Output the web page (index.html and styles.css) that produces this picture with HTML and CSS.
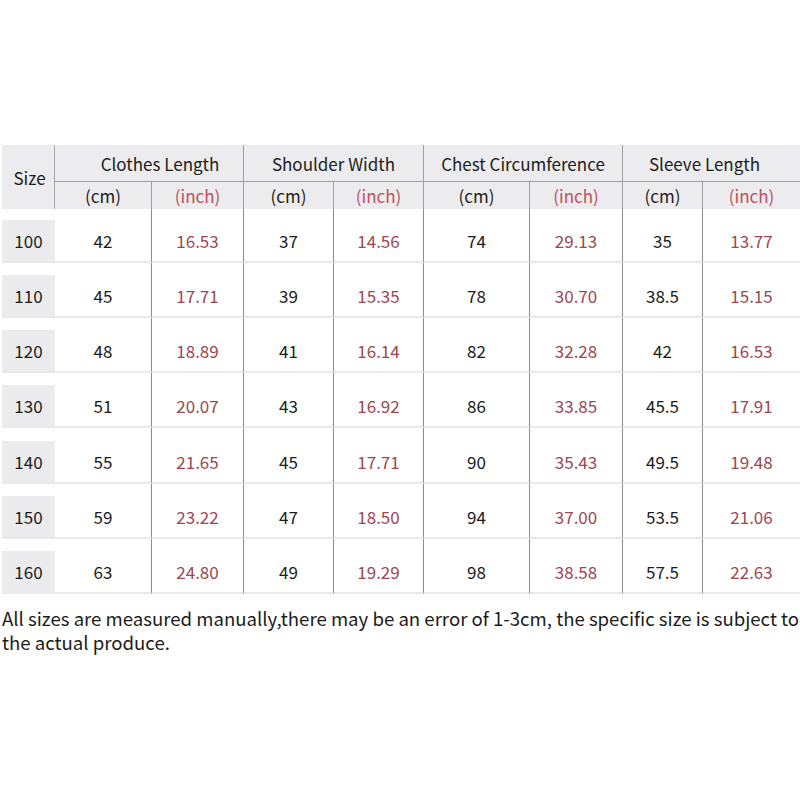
FILE: index.html
```html
<!DOCTYPE html>
<html>
<head>
<meta charset="utf-8">
<link rel="stylesheet" href="styles.css">
</head>
<body>
<div class="page">
  <div class="table">
    <div class="head">
      <div class="h-size">Size</div>
      <div class="h-group g1">Clothes Length</div>
      <div class="h-group g2 sep">Shoulder Width</div>
      <div class="h-group g3 sep">Chest Circumference</div>
      <div class="h-group g4 sep">Sleeve Length</div>
      <div class="h-unit">(cm)</div>
      <div class="h-unit inch sep">(inch)</div>
      <div class="h-unit sep">(cm)</div>
      <div class="h-unit inch sep">(inch)</div>
      <div class="h-unit sep">(cm)</div>
      <div class="h-unit inch sep">(inch)</div>
      <div class="h-unit sep">(cm)</div>
      <div class="h-unit inch sep">(inch)</div>
    </div>
    <div class="body">
      <div class="row first"><div class="c size">100</div><div class="c">42</div><div class="c in sep">16.53</div><div class="c sep">37</div><div class="c in sep">14.56</div><div class="c sep">74</div><div class="c in sep">29.13</div><div class="c sep">35</div><div class="c in sep">13.77</div></div>
      <div class="row"><div class="c size">110</div><div class="c">45</div><div class="c in sep">17.71</div><div class="c sep">39</div><div class="c in sep">15.35</div><div class="c sep">78</div><div class="c in sep">30.70</div><div class="c sep">38.5</div><div class="c in sep">15.15</div></div>
      <div class="row"><div class="c size">120</div><div class="c">48</div><div class="c in sep">18.89</div><div class="c sep">41</div><div class="c in sep">16.14</div><div class="c sep">82</div><div class="c in sep">32.28</div><div class="c sep">42</div><div class="c in sep">16.53</div></div>
      <div class="row"><div class="c size">130</div><div class="c">51</div><div class="c in sep">20.07</div><div class="c sep">43</div><div class="c in sep">16.92</div><div class="c sep">86</div><div class="c in sep">33.85</div><div class="c sep">45.5</div><div class="c in sep">17.91</div></div>
      <div class="row"><div class="c size">140</div><div class="c">55</div><div class="c in sep">21.65</div><div class="c sep">45</div><div class="c in sep">17.71</div><div class="c sep">90</div><div class="c in sep">35.43</div><div class="c sep">49.5</div><div class="c in sep">19.48</div></div>
      <div class="row"><div class="c size">150</div><div class="c">59</div><div class="c in sep">23.22</div><div class="c sep">47</div><div class="c in sep">18.50</div><div class="c sep">94</div><div class="c in sep">37.00</div><div class="c sep">53.5</div><div class="c in sep">21.06</div></div>
      <div class="row"><div class="c size">160</div><div class="c">63</div><div class="c in sep">24.80</div><div class="c sep">49</div><div class="c in sep">19.29</div><div class="c sep">98</div><div class="c in sep">38.58</div><div class="c sep">57.5</div><div class="c in sep">22.63</div></div>
    </div>
  </div>
  <p class="note">All sizes are measured manually,there may be an error of 1-3cm, the specific size is subject to the actual produce.</p>
</div>
</body>
</html>
```

FILE: styles.css
```css
html, body {
  margin: 0;
  padding: 0;
  background: #ffffff;
}
.page {
  width: 800px;
  height: 800px;
  padding-top: 145px;
  box-sizing: border-box;
  font-family: "Noto Sans CJK SC", "Noto Sans", sans-serif;
  color: #1c1c1c;
}
.table {
  margin-left: 2px;
  width: 798px;
}
.head, .row {
  display: grid;
  grid-template-columns: 53px 96px 92px 90px 90px 106px 93px 80px 98px;
}
.head {
  grid-template-rows: 37px 27px;
  background: #ececee;
  font-size: 17px;
}
.h-size {
  grid-row: 1 / 3;
  grid-column: 1;
  display: flex;
  align-items: center;
  justify-content: center;
  padding: 0 0 0 3px;
  box-sizing: border-box;
  border-right: 1px solid #a8a8a8;
}
.h-group {
  grid-row: 1;
  display: flex;
  align-items: center;
  justify-content: center;
  padding-top: 1px;
  box-sizing: border-box;
  border-bottom: 1px solid #a0a0a0;
}
.g1 { grid-column: 2 / 4; padding-left: 22px; }
.g2 { grid-column: 4 / 6; }
.g3 { grid-column: 6 / 8; }
.g4 { grid-column: 8 / 10; padding-right: 14px; }
.h-unit {
  grid-row: 2;
  display: flex;
  align-items: center;
  justify-content: center;
  padding-bottom: 1px;
  box-sizing: border-box;
}
.h-unit.inch {
  color: #c0505f;
}
.sep {
  border-left: 1px solid #8c8c8c;
}
.h-group.sep, .h-unit.sep {
  border-left-color: #a0a0a0;
}
.row {
  height: 55.17px;
}
.row.first {
  height: 54px;
}
.c {
  padding-top: 12.17px;
  line-height: 41px;
  font-size: 17px;
  text-align: center;
  border-bottom: 2px solid #e9e9e9;
  box-sizing: border-box;
}
.row.first .c {
  padding-top: 11px;
}
.c.size {
  background: #ebebed;
  background-clip: content-box;
}
.c.in {
  color: #9e4652;
}
.note {
  margin: 12px 0 0 2px;
  font-size: 18.6px;
  line-height: 24px;
  color: #1c1c1c;
}
```
